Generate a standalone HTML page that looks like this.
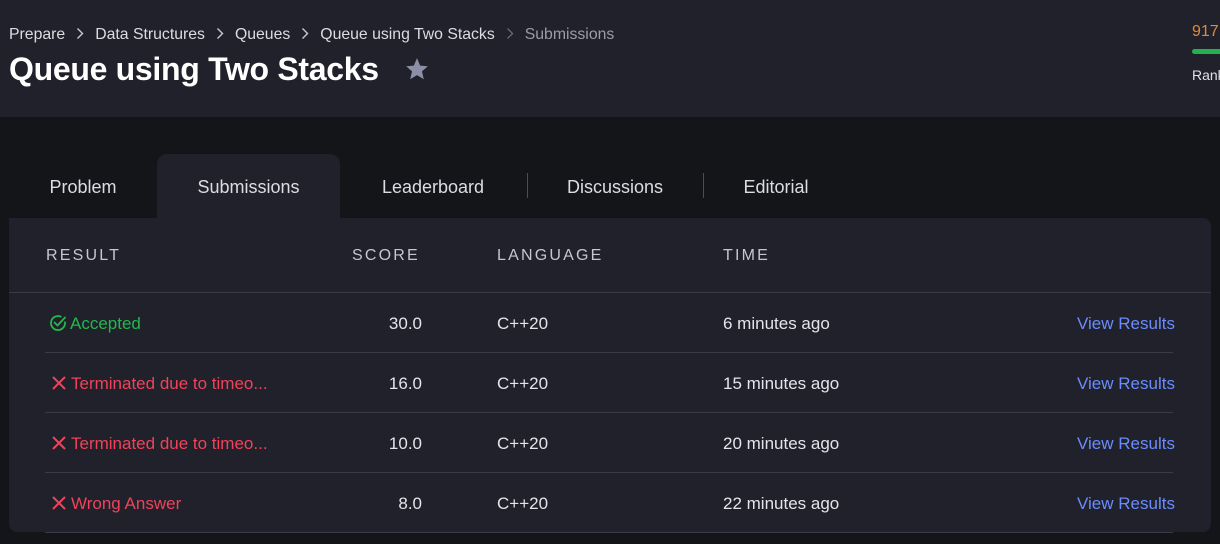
<!DOCTYPE html>
<html><head><meta charset="utf-8"><style>
*{margin:0;padding:0;box-sizing:border-box}
body{width:1220px;height:544px;overflow:hidden;background:#141519;font-family:"Liberation Sans",sans-serif;position:relative}
.hdr{position:absolute;left:0;top:0;width:1220px;height:117px;background:#20212a}
.bc{position:absolute;left:9px;top:26px;font-size:15.8px;color:#dcdde3;white-space:nowrap}
.bc svg{margin:0 11px;vertical-align:-1px}
.bc .cur{color:#9a9ca8}
h1{position:absolute;left:9px;top:51px;font-size:32px;font-weight:bold;color:#fff;letter-spacing:-0.3px}
.star{position:absolute;left:404px;top:56px}
.r1{position:absolute;left:1192px;top:23px;color:#e08a38;font-size:16px}
.bar{position:absolute;left:1192px;top:49px;width:40px;height:5px;border-radius:3px;background:#24b04f}
.r2{position:absolute;left:1192px;top:67px;color:#dfe0ea;font-size:14px}
.tab{position:absolute;top:154px;height:64px;line-height:66px;font-size:18px;color:#dcdde3;text-align:center}
.tab.act{background:#20212a;border-radius:10px 10px 0 0}
.div{position:absolute;top:173px;width:1px;height:25px;background:#4a4c57}
.panel{position:absolute;left:9px;top:218px;width:1202px;height:314px;background:#20212a;border-radius:0 8px 8px 8px}
.th{position:absolute;top:247px;font-size:16px;letter-spacing:2.2px;color:#c4c6d0}
.hl{position:absolute;left:9px;top:292px;width:1202px;height:1px;background:#3a3b46}
.rl{position:absolute;left:45px;width:1128px;height:1px;background:#3a3b46}
.c{position:absolute;font-size:17px;color:#e4e5ec;white-space:nowrap}
.s{position:absolute;font-size:17px;color:#e4e5ec;right:798px;text-align:right}
.g{color:#22b84f}.red{color:#f0435a}.lnk{color:#6a8cff}
</style></head><body>
<div class="hdr"></div>
<div class="bc">Prepare<svg width="8" height="13" viewBox="0 0 8 13"><path d="M1.5 1.5l5 5-5 5" fill="none" stroke="#c8cad2" stroke-width="1.4"/></svg>Data Structures<svg width="8" height="13" viewBox="0 0 8 13"><path d="M1.5 1.5l5 5-5 5" fill="none" stroke="#c8cad2" stroke-width="1.4"/></svg>Queues<svg width="8" height="13" viewBox="0 0 8 13"><path d="M1.5 1.5l5 5-5 5" fill="none" stroke="#c8cad2" stroke-width="1.4"/></svg>Queue using Two Stacks<svg width="8" height="13" viewBox="0 0 8 13"><path d="M1.5 1.5l5 5-5 5" fill="none" stroke="#6e707c" stroke-width="1.2"/></svg><span class="cur">Submissions</span></div>
<h1>Queue using Two Stacks</h1>
<svg class="star" width="26" height="26" viewBox="0 0 24 24"><path d="M12 2l2.9 6.9 7.1.6-5.4 4.7 1.7 7.3L12 17.6 5.7 21.5l1.7-7.3L2 9.5l7.1-.6z" fill="#8d8fa6"/></svg>
<div class="r1">917</div><div class="bar"></div><div class="r2">Rank</div>
<div class="tab" style="left:30px;width:106px">Problem</div>
<div class="tab act" style="left:157px;width:183px">Submissions</div>
<div class="tab" style="left:360px;width:146px">Leaderboard</div>
<div class="div" style="left:527px"></div>
<div class="tab" style="left:548px;width:134px">Discussions</div>
<div class="div" style="left:703px"></div>
<div class="tab" style="left:724px;width:104px">Editorial</div>
<div class="panel"></div>
<div class="th" style="left:46px">RESULT</div>
<div class="th" style="left:352px">SCORE</div>
<div class="th" style="left:497px">LANGUAGE</div>
<div class="th" style="left:723px">TIME</div>
<div class="hl"></div>

<div class="c g" style="left:49px;top:314px"><svg width="18" height="18" viewBox="0 0 18 18" style="vertical-align:-3px;margin-right:3px"><path d="M16 8.3V9a7 7 0 1 1-4.2-6.4" fill="none" stroke="#22b84f" stroke-width="1.8" stroke-linecap="round"/><path d="M5.5 8.5l3 3L16 3.5" fill="none" stroke="#22b84f" stroke-width="1.8" stroke-linecap="round" stroke-linejoin="round"/></svg>Accepted</div>
<div class="s" style="top:314px">30.0</div><div class="c" style="left:497px;top:314px">C++20</div><div class="c" style="left:723px;top:314px">6 minutes ago</div><div class="c lnk" style="left:1077px;top:314px">View Results</div>
<div class="rl" style="top:352px"></div>

<div class="c red" style="left:51px;top:374px"><svg width="16" height="16" viewBox="0 0 16 16" style="vertical-align:-2px;margin-right:4px"><path d="M2 2l12 12M14 2L2 14" stroke="#f0435a" stroke-width="2"/></svg>Terminated due to timeo...</div>
<div class="s" style="top:374px">16.0</div><div class="c" style="left:497px;top:374px">C++20</div><div class="c" style="left:723px;top:374px">15 minutes ago</div><div class="c lnk" style="left:1077px;top:374px">View Results</div>
<div class="rl" style="top:412px"></div>

<div class="c red" style="left:51px;top:434px"><svg width="16" height="16" viewBox="0 0 16 16" style="vertical-align:-2px;margin-right:4px"><path d="M2 2l12 12M14 2L2 14" stroke="#f0435a" stroke-width="2"/></svg>Terminated due to timeo...</div>
<div class="s" style="top:434px">10.0</div><div class="c" style="left:497px;top:434px">C++20</div><div class="c" style="left:723px;top:434px">20 minutes ago</div><div class="c lnk" style="left:1077px;top:434px">View Results</div>
<div class="rl" style="top:472px"></div>

<div class="c red" style="left:51px;top:494px"><svg width="16" height="16" viewBox="0 0 16 16" style="vertical-align:-2px;margin-right:4px"><path d="M2 2l12 12M14 2L2 14" stroke="#f0435a" stroke-width="2"/></svg>Wrong Answer</div>
<div class="s" style="top:494px">8.0</div><div class="c" style="left:497px;top:494px">C++20</div><div class="c" style="left:723px;top:494px">22 minutes ago</div><div class="c lnk" style="left:1077px;top:494px">View Results</div>
<div class="rl" style="top:532px"></div>
</body></html>
